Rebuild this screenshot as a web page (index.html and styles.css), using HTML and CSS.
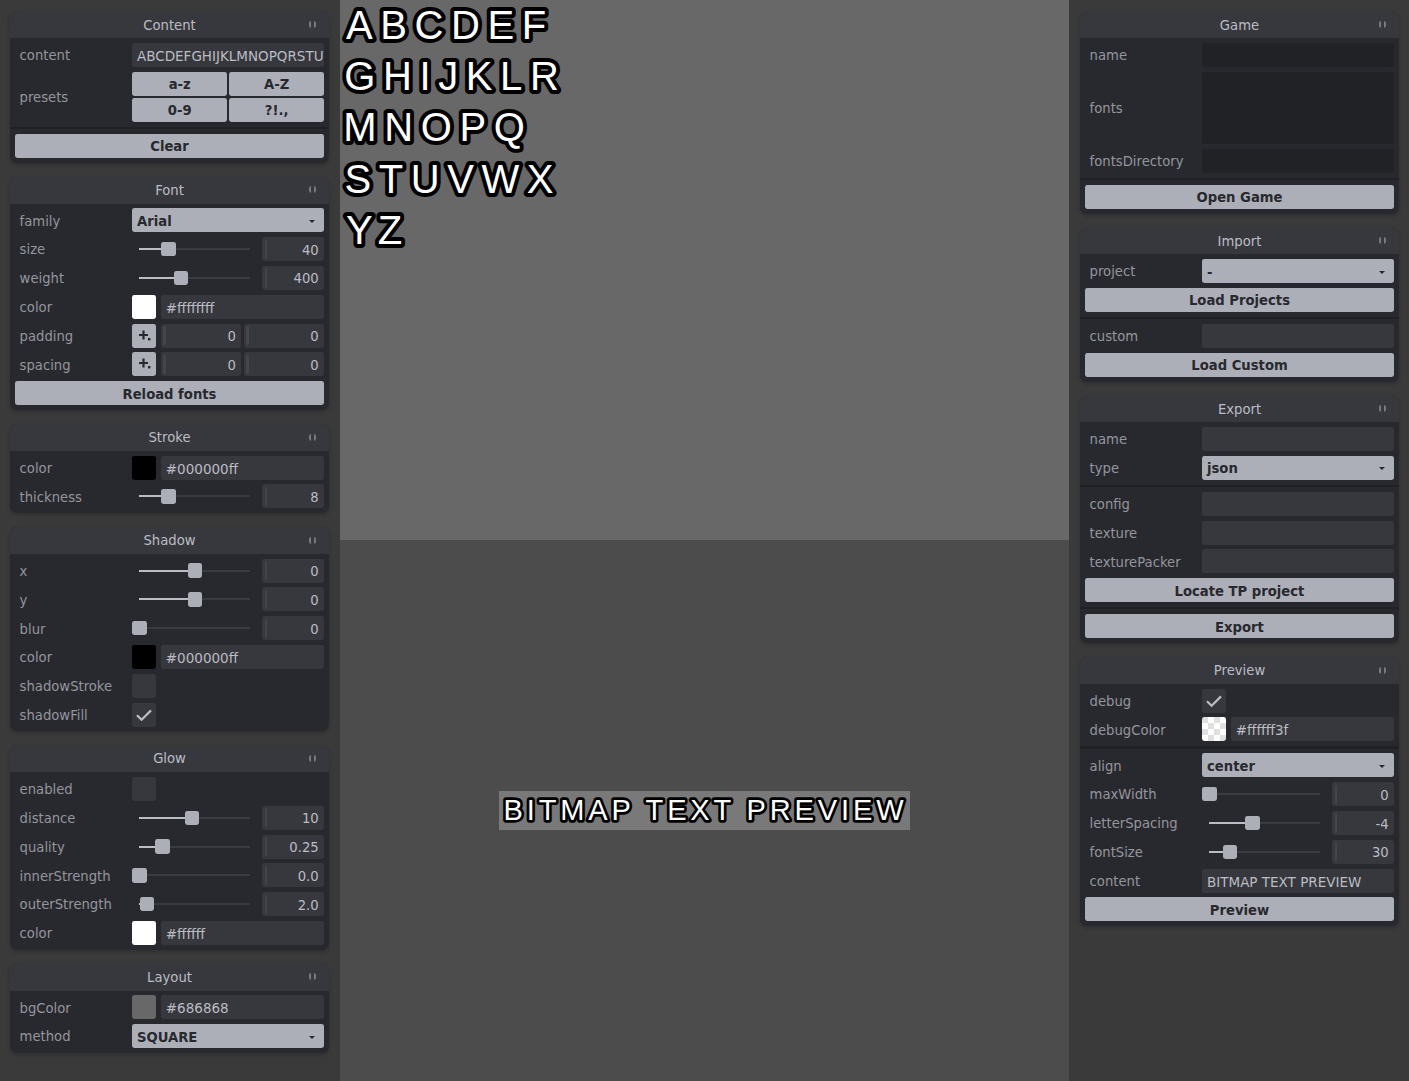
FILE: index.html
```html
<!DOCTYPE html>
<html>
<head>
<meta charset="utf-8">
<title>Bitmap Font Generator</title>
<link rel="stylesheet" href="styles.css">
</head>
<body>
<div class="app">
  <aside class="sidebar left">
    <section class="pane">
      <div class="pane-title">Content<span class="fold"></span></div>
      <div class="pane-body">
        <div class="row"><div class="label">content</div><div class="value"><div class="field">ABCDEFGHIJKLMNOPQRSTUVWXYZ</div></div></div>
        <div class="row"><div class="label">presets</div><div class="value"><div class="grid2"><div class="btn">a-z</div><div class="btn">A-Z</div><div class="btn">0-9</div><div class="btn">?!.,</div></div></div></div>
        <div class="sep"></div>
        <div class="btn">Clear</div>
      </div>
    </section>
    <section class="pane">
      <div class="pane-title">Font<span class="fold"></span></div>
      <div class="pane-body">
        <div class="row"><div class="label">family</div><div class="value"><div class="select"><span class="sel-text">Arial</span><svg class="caret" viewBox="0 0 6 3"><path d="M0 0h6l-3 3z"/></svg></div></div></div>
        <div class="row"><div class="label">size</div><div class="value"><div class="slider"><div class="track" style="--v:26.2%"><div class="fill"></div><div class="knob"></div></div></div><div class="field num">40</div></div></div>
        <div class="row"><div class="label">weight</div><div class="value"><div class="slider"><div class="track" style="--v:37.3%"><div class="fill"></div><div class="knob"></div></div></div><div class="field num">400</div></div></div>
        <div class="row"><div class="label">color</div><div class="value"><div class="swatch white"></div><div class="field">#ffffffff</div></div></div>
        <div class="row"><div class="label">padding</div><div class="value"><div class="p2d"><svg viewBox="0 0 24 24"><path d="M7 11h9M11.5 6.5v9" stroke="#28292e" stroke-width="2.2" fill="none"/><rect x="16" y="14" width="2.4" height="2.4" fill="#28292e"/></svg></div><div class="pair"><div class="field num">0</div><div class="field num">0</div></div></div></div>
        <div class="row"><div class="label">spacing</div><div class="value"><div class="p2d"><svg viewBox="0 0 24 24"><path d="M7 11h9M11.5 6.5v9" stroke="#28292e" stroke-width="2.2" fill="none"/><rect x="16" y="14" width="2.4" height="2.4" fill="#28292e"/></svg></div><div class="pair"><div class="field num">0</div><div class="field num">0</div></div></div></div>
        <div class="btn">Reload fonts</div>
      </div>
    </section>
    <section class="pane">
      <div class="pane-title">Stroke<span class="fold"></span></div>
      <div class="pane-body">
        <div class="row"><div class="label">color</div><div class="value"><div class="swatch black"></div><div class="field">#000000ff</div></div></div>
        <div class="row"><div class="label">thickness</div><div class="value"><div class="slider"><div class="track" style="--v:26.3%"><div class="fill"></div><div class="knob"></div></div></div><div class="field num">8</div></div></div>
      </div>
    </section>
    <section class="pane">
      <div class="pane-title">Shadow<span class="fold"></span></div>
      <div class="pane-body">
        <div class="row"><div class="label">x</div><div class="value"><div class="slider"><div class="track" style="--v:50%"><div class="fill"></div><div class="knob"></div></div></div><div class="field num">0</div></div></div>
        <div class="row"><div class="label">y</div><div class="value"><div class="slider"><div class="track" style="--v:50%"><div class="fill"></div><div class="knob"></div></div></div><div class="field num">0</div></div></div>
        <div class="row"><div class="label">blur</div><div class="value"><div class="slider"><div class="track" style="--v:0%"><div class="fill"></div><div class="knob"></div></div></div><div class="field num">0</div></div></div>
        <div class="row"><div class="label">color</div><div class="value"><div class="swatch black"></div><div class="field">#000000ff</div></div></div>
        <div class="row"><div class="label">shadowStroke</div><div class="value"><div class="check"></div></div></div>
        <div class="row"><div class="label">shadowFill</div><div class="value"><div class="check"><svg viewBox="0 0 24 24"><path d="M5 12.2l4.6 4.6L19 7.4" fill="none" stroke="#bbbcc4" stroke-width="2.2"/></svg></div></div></div>
      </div>
    </section>
    <section class="pane">
      <div class="pane-title">Glow<span class="fold"></span></div>
      <div class="pane-body">
        <div class="row"><div class="label">enabled</div><div class="value"><div class="check"></div></div></div>
        <div class="row"><div class="label">distance</div><div class="value"><div class="slider"><div class="track" style="--v:47.2%"><div class="fill"></div><div class="knob"></div></div></div><div class="field num">10</div></div></div>
        <div class="row"><div class="label">quality</div><div class="value"><div class="slider"><div class="track" style="--v:21%"><div class="fill"></div><div class="knob"></div></div></div><div class="field num">0.25</div></div></div>
        <div class="row"><div class="label">innerStrength</div><div class="value"><div class="slider"><div class="track" style="--v:0%"><div class="fill"></div><div class="knob"></div></div></div><div class="field num">0.0</div></div></div>
        <div class="row"><div class="label">outerStrength</div><div class="value"><div class="slider"><div class="track" style="--v:6.6%"><div class="fill"></div><div class="knob"></div></div></div><div class="field num">2.0</div></div></div>
        <div class="row"><div class="label">color</div><div class="value"><div class="swatch white"></div><div class="field">#ffffff</div></div></div>
      </div>
    </section>
    <section class="pane">
      <div class="pane-title">Layout<span class="fold"></span></div>
      <div class="pane-body">
        <div class="row"><div class="label">bgColor</div><div class="value"><div class="swatch grey"></div><div class="field">#686868</div></div></div>
        <div class="row"><div class="label">method</div><div class="value"><div class="select"><span class="sel-text">SQUARE</span><svg class="caret" viewBox="0 0 6 3"><path d="M0 0h6l-3 3z"/></svg></div></div></div>
      </div>
    </section>
  </aside>

  <main class="stage">
    <div class="stage-top">
      <svg class="atlas" width="729" height="540" viewBox="0 0 729 540">
        <g class="glyphs">
          <text x="6" y="38.7">ABCDEF</text>
          <text x="4.3" y="90">GHIJKLR</text>
          <text x="3.3" y="141.4">MNOPQ</text>
          <text x="4.4" y="192.8">STUVWX</text>
          <text x="6" y="244.2" class="tight">YZ</text>
        </g>
      </svg>
    </div>
    <div class="stage-bottom">
      <div class="preview-box">
        <svg width="411" height="39" viewBox="0 0 411 39">
          <text class="preview-text" x="4.5" y="28.5" textLength="400" lengthAdjust="spacing">BITMAP TEXT PREVIEW</text>
        </svg>
      </div>
    </div>
  </main>

  <aside class="sidebar right">
    <section class="pane">
      <div class="pane-title">Game<span class="fold"></span></div>
      <div class="pane-body">
        <div class="row"><div class="label">name</div><div class="value"><div class="field dark"></div></div></div>
        <div class="row"><div class="label">fonts</div><div class="value"><div class="field dark tall"></div></div></div>
        <div class="row"><div class="label">fontsDirectory</div><div class="value"><div class="field dark"></div></div></div>
        <div class="sep"></div>
        <div class="btn">Open Game</div>
      </div>
    </section>
    <section class="pane">
      <div class="pane-title">Import<span class="fold"></span></div>
      <div class="pane-body">
        <div class="row"><div class="label">project</div><div class="value"><div class="select"><span class="sel-text">-</span><svg class="caret" viewBox="0 0 6 3"><path d="M0 0h6l-3 3z"/></svg></div></div></div>
        <div class="btn">Load Projects</div>
        <div class="sep"></div>
        <div class="row"><div class="label">custom</div><div class="value"><div class="field"></div></div></div>
        <div class="btn">Load Custom</div>
      </div>
    </section>
    <section class="pane">
      <div class="pane-title">Export<span class="fold"></span></div>
      <div class="pane-body">
        <div class="row"><div class="label">name</div><div class="value"><div class="field"></div></div></div>
        <div class="row"><div class="label">type</div><div class="value"><div class="select"><span class="sel-text">json</span><svg class="caret" viewBox="0 0 6 3"><path d="M0 0h6l-3 3z"/></svg></div></div></div>
        <div class="sep"></div>
        <div class="row"><div class="label">config</div><div class="value"><div class="field"></div></div></div>
        <div class="row"><div class="label">texture</div><div class="value"><div class="field"></div></div></div>
        <div class="row"><div class="label">texturePacker</div><div class="value"><div class="field"></div></div></div>
        <div class="btn">Locate TP project</div>
        <div class="sep"></div>
        <div class="btn">Export</div>
      </div>
    </section>
    <section class="pane">
      <div class="pane-title">Preview<span class="fold"></span></div>
      <div class="pane-body">
        <div class="row"><div class="label">debug</div><div class="value"><div class="check"><svg viewBox="0 0 24 24"><path d="M5 12.2l4.6 4.6L19 7.4" fill="none" stroke="#bbbcc4" stroke-width="2.2"/></svg></div></div></div>
        <div class="row"><div class="label">debugColor</div><div class="value"><div class="swatch checker"></div><div class="field">#ffffff3f</div></div></div>
        <div class="sep"></div>
        <div class="row"><div class="label">align</div><div class="value"><div class="select"><span class="sel-text">center</span><svg class="caret" viewBox="0 0 6 3"><path d="M0 0h6l-3 3z"/></svg></div></div></div>
        <div class="row"><div class="label">maxWidth</div><div class="value"><div class="slider"><div class="track" style="--v:0%"><div class="fill"></div><div class="knob"></div></div></div><div class="field num">0</div></div></div>
        <div class="row"><div class="label">letterSpacing</div><div class="value"><div class="slider"><div class="track" style="--v:38.9%"><div class="fill"></div><div class="knob"></div></div></div><div class="field num">-4</div></div></div>
        <div class="row"><div class="label">fontSize</div><div class="value"><div class="slider"><div class="track" style="--v:18.4%"><div class="fill"></div><div class="knob"></div></div></div><div class="field num">30</div></div></div>
        <div class="row"><div class="label">content</div><div class="value"><div class="field">BITMAP TEXT PREVIEW</div></div></div>
        <div class="btn">Preview</div>
      </div>
    </section>
  </aside>
</div>
</body>
</html>
```
FILE: styles.css
```css
* { box-sizing: border-box; }
html, body { margin: 0; padding: 0; }
body {
  width: 1409px;
  height: 1081px;
  overflow: hidden;
  background: #3a3a3a;
  font-family: "DejaVu Sans", Verdana, sans-serif;
  font-size: 13.2px;
}
.app { display: flex; height: 1081px; }

.sidebar {
  width: 340px;
  flex: none;
  background: #3a3a3a;
  padding-top: 12px;
  display: flex;
  flex-direction: column;
  gap: 14.4px;
}
.sidebar.left { padding-left: 10px; }
.sidebar.right { padding-left: 11px; }

.pane {
  width: 319px;
  background: #28292e;
  border-radius: 7px;
  box-shadow: 0 2px 4px rgba(0, 0, 0, 0.2);
  overflow: hidden;
}
.pane-title {
  position: relative;
  height: 26.4px;
  background: #37383d;
  color: #bbbcc4;
  display: flex;
  align-items: center;
  justify-content: center;
  line-height: 1;
}
.fold {
  position: absolute;
  right: 13px;
  top: 50%;
  width: 7px;
  height: 7px;
  margin-top: -4px;
  border-radius: 2.4px;
  opacity: 0.5;
  background: linear-gradient(to left, #bbbcc4 0 2.4px, transparent 2.4px 4.6px, #bbbcc4 4.6px);
}
.pane-body {
  padding: 4.8px;
  display: flex;
  flex-direction: column;
  gap: 4.8px;
}
.sep {
  height: 2.4px;
  margin: 0 -4.8px;
  background: #202125;
}
.row {
  display: flex;
  align-items: center;
  min-height: 24px;
}
.label {
  flex: 1;
  min-width: 0;
  padding: 1.5px 0 0 4.8px;
  color: #94959d;
  white-space: nowrap;
  overflow: hidden;
}
.value {
  width: 192px;
  flex: none;
  display: flex;
  gap: 4.8px;
}

.btn {
  height: 24px;
  padding-top: 2px;
  background: #adafb8;
  color: #28292e;
  font-weight: bold;
  border-radius: 2.4px;
  display: flex;
  align-items: center;
  justify-content: center;
  white-space: nowrap;
}
.grid2 {
  flex: 1;
  display: grid;
  grid-template-columns: 1fr 1fr;
  gap: 2px;
}

.field {
  flex: 1;
  min-width: 0;
  height: 24px;
  background: #37383d;
  border-radius: 2.4px;
  color: #bbbcc4;
  padding: 2px 4.8px 0;
  font-size: 13.5px;
  display: flex;
  align-items: center;
  white-space: nowrap;
  overflow: hidden;
}
.field.dark { background: #212226; }
.field.tall { height: 72px; }
.field.num {
  position: relative;
  justify-content: flex-end;
  padding-right: 5.5px;
  font-size: 13.2px;
}
.field.num::before {
  content: "";
  position: absolute;
  left: 2.4px;
  top: 2.4px;
  bottom: 2.4px;
  width: 2.4px;
  border-radius: 1.2px;
  background: rgba(187, 188, 196, 0.1);
}
.slider + .field.num { flex: none; width: 62px; }
.pair { flex: 1; display: flex; gap: 2.4px; min-width: 0; }

.select {
  flex: 1;
  height: 24px;
  background: #adafb8;
  color: #28292e;
  font-weight: bold;
  border-radius: 2.4px;
  display: flex;
  align-items: center;
  padding: 2px 9px 0 4.8px;
}
.sel-text { flex: 1; }
.caret { width: 6px; height: 3px; fill: #28292e; }

.swatch {
  width: 24px;
  height: 24px;
  flex: none;
  border-radius: 2.4px;
}
.swatch.white { background: #ffffff; }
.swatch.black { background: #000000; }
.swatch.grey { background: #686868; }
.swatch.checker {
  background: conic-gradient(#ffffff 0 25%, #e0e0e0 0 50%, #ffffff 0 75%, #e0e0e0 0) 0 0 / 12px 12px;
}

.p2d {
  width: 24px;
  height: 24px;
  flex: none;
  border-radius: 2.4px;
  background: #adafb8;
}
.p2d svg, .check svg { display: block; width: 24px; height: 24px; }

.check {
  width: 24px;
  height: 24px;
  border-radius: 2.4px;
  background: #37383d;
}

.slider {
  flex: 1;
  position: relative;
  height: 24px;
}
.track {
  position: absolute;
  left: 7.2px;
  right: 7.2px;
  top: 11px;
  height: 2px;
  background: #3b3c42;
}
.fill {
  position: absolute;
  left: 0;
  top: 0;
  bottom: 0;
  width: var(--v);
  background: #bbbcc4;
}
.knob {
  position: absolute;
  left: var(--v);
  top: 50%;
  width: 14.4px;
  height: 14.4px;
  margin-left: -7.2px;
  margin-top: -7.2px;
  border-radius: 2.4px;
  background: #adafb8;
}

.stage {
  flex: 1;
  display: flex;
  flex-direction: column;
}
.stage-top {
  height: 540px;
  flex: none;
  background: #686868;
}
.atlas { display: block; }
.glyphs text {
  font-family: "Liberation Sans", Arial, sans-serif;
  font-size: 40px;
  letter-spacing: 7.6px;
  fill: #ffffff;
  stroke: #000000;
  stroke-width: 8px;
  stroke-linejoin: round;
  paint-order: stroke fill;
}
.glyphs text.tight { letter-spacing: 5px; }
.stage-bottom {
  flex: 1;
  background: #4c4c4c;
  display: flex;
  align-items: center;
  justify-content: center;
}
.preview-box {
  width: 411px;
  height: 39px;
  background: rgba(255, 255, 255, 0.25);
}
.preview-box svg { display: block; }
.preview-text {
  font-family: "Liberation Sans", Arial, sans-serif;
  font-size: 29px;
  fill: #ffffff;
  stroke: #000000;
  stroke-width: 5.5px;
  stroke-linejoin: round;
  paint-order: stroke fill;
}
```
